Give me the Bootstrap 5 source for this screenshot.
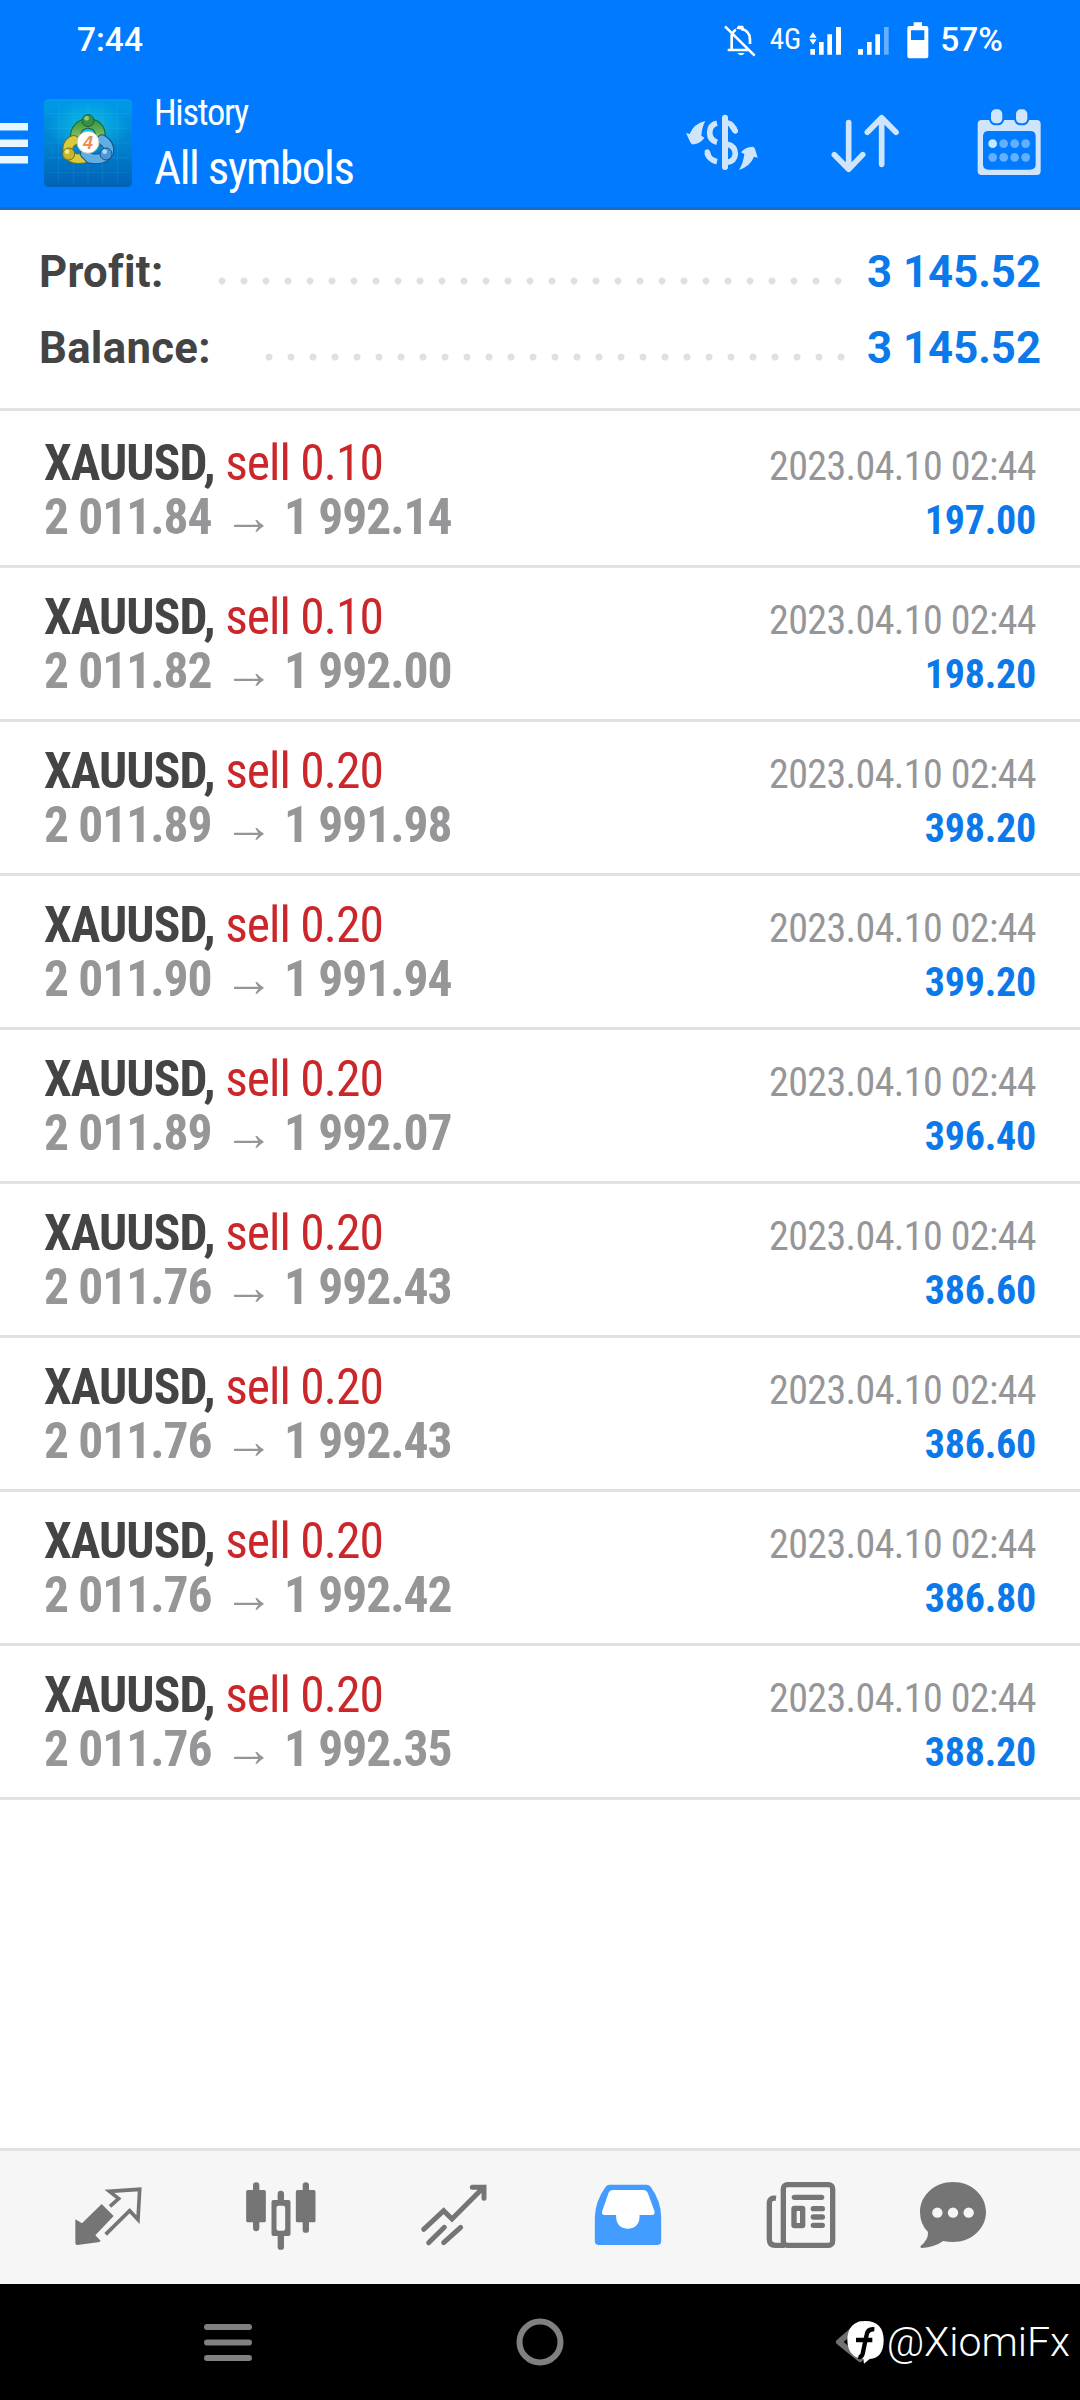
<!DOCTYPE html>
<html lang="en">
<head>
<meta charset="utf-8">
<meta name="viewport" content="width=device-width, initial-scale=1">
<title>History - All symbols</title>
<link href="https://cdn.jsdelivr.net/npm/bootstrap@5.3.0/dist/css/bootstrap.min.css" rel="stylesheet">
<style>
  body { font-family: Roboto, "Noto Sans", sans-serif; background: #fff; width: 1080px; height: 2400px; overflow: hidden; }
  svg { display: block; flex: none; }
  .cond { font-family: "Roboto Condensed", Roboto, sans-serif; }
  .top-zone { background: #007aff; height: 210px; border-bottom: 3px solid #1a6dc0; color: #fff; }
  .status { height: 79px; padding: 0 77px 0 77px; font-weight: 500; font-size: 33.5px; line-height: 79px; }
  .status .net { font-size: 29px; font-weight: 400; }
  .app-bar { height: 128px; padding-right: 39px; }
  .titles { margin-left: 22px; padding-top: 6px; }
  .title-sm { font-size: 36.5px; line-height: 44px; letter-spacing: -1.3px; font-weight: 450; }
  .title-lg { font-size: 47px; line-height: 66px; letter-spacing: -1.4px; font-weight: 450; }
  .summary { height: 201px; padding: 24px 39px 0 39px; border-bottom: 3px solid #e1e1e1; font-size: 43.7px; font-weight: 700; color: #444; }
  .sum-line { height: 76px; line-height: 76px; }
  .sum-label { letter-spacing: .3px; }
  .dots { height: 8px; margin-top: 18px; background: radial-gradient(circle at 50% 50%, #e0e0e0 3px, transparent 4px) 0 0 / 22px 8px repeat-x; }
  .dots-a { width: 638px; margin-right: 18px; }
  .dots-b { width: 594px; margin-right: 15px; }
  .blue { color: #0b79ea; }
  .deal { height: 154px; padding: 22px 44px 0 44px; border-bottom: 3px solid #e1e1e1; }
  .deal:first-child { height: 157px; padding-top: 25px; }
  .deal-line { height: 54px; line-height: 54px; font-size: 49.5px; white-space: nowrap; letter-spacing: -.93px; }
  .sym { font-weight: 700; color: #444; }
  .side { color: #cb272a; }
  .prices { font-weight: 700; color: #969698; letter-spacing: -1.05px; }
  .arrow { font-family: "Liberation Sans", sans-serif; font-size: 50px; line-height: 1; margin: 0 11px 0 12.5px; }
  .when { font-size: 40px; color: #969698; letter-spacing: -.6px; }
  .gain { font-size: 40px; font-weight: 700; letter-spacing: -.25px; }
  .tabs-bar { height: 136px; background: #f6f6f6; border-top: 3px solid #e1e1e1; padding: 0 0 5px 21.5px; color: #757575; }
  .tab-item { width: 173.2px; }
  .tab-item:last-child { width: 131px; }
  .sys-bar { height: 116px; background: #000; padding: 0 204px; }
  .handle { right: 10px; top: 30px; font-size: 41px; font-weight: 350; line-height: 56px; color: #fff; }
</style>
</head>
<body class="d-flex flex-column">
<header class="top-zone flex-shrink-0">
  <div class="status d-flex align-items-center">
    <span class="me-auto">7:44</span>
    <svg width="34" height="34" viewBox="190 62 102 102" fill="none" stroke="#fff" stroke-width="8">
      <path d="M199 72 288 160M219 96V143M207 143H268M222 92Q226 84 232 82M247 80Q274 84 274 112V125"/>
      <path d="M233 80 238 70H253L258 82ZM236 152H258Q247 166 236 152Z" fill="#fff" stroke="none"/>
    </svg>
    <span class="net cond" style="margin-left:14px">4G</span>
    <svg style="margin-left:8px" width="32" height="34" viewBox="450 62 96 102" fill="#fff"><path d="M451 106 462 90 473 106ZM451 111H473L462 127ZM454 140H468V157H454ZM480 119H494V157H480ZM505 96H519V157H505ZM531 74H546V157H531Z"/></svg>
    <svg style="margin-left:16px" width="32" height="34" viewBox="597 62 96 102" fill="#fff"><path d="M600 140H615V157H600ZM627 119H641V157H627ZM652 96H666V157H652Z"/><path opacity=".4" d="M678 74H692V157H678Z"/></svg>
    <svg style="margin-left:18px" width="22" height="38" viewBox="746 56 66 114" fill="#fff"><path fill-rule="evenodd" d="M766 60H791V71H804Q810 71 810 77V162Q810 168 804 168H753Q747 168 747 162V77Q747 71 753 71H766ZM758 84V113H798V84Z"/></svg>
    <span style="margin-left:11px">57%</span>
  </div>
  <div class="app-bar cond d-flex align-items-center">
    <svg width="28" height="42" viewBox="0 0 28 42" fill="#e6f7ff"><path d="M0 1H28V8.500H0ZM0 17.500H28V25H0ZM0 34H28V41.500H0Z"/></svg>
    <svg style="margin-left:16px" width="88" height="88" viewBox="0 0 264 264">
      <defs>
        <linearGradient id="lg" x1="0" y1="0" x2="0" y2="1"><stop offset="0" stop-color="#009bea"/><stop offset=".5" stop-color="#0084d0"/><stop offset="1" stop-color="#0061b5"/></linearGradient>
        <radialGradient id="glow"><stop offset="0" stop-color="#10c6e0" stop-opacity=".9"/><stop offset="1" stop-color="#10c6e0" stop-opacity="0"/></radialGradient>
        <linearGradient id="gg" x1="0" y1="0" x2="0" y2="1"><stop offset="0" stop-color="#3f9d49"/><stop offset="1" stop-color="#9acb68"/></linearGradient>
      </defs>
      <rect width="264" height="264" rx="14" fill="url(#lg)"/>
      <ellipse cx="132" cy="85" rx="120" ry="80" fill="url(#glow)"/>
      <path d="M44 10V254M88 10V254M132 10V254M176 10V254M220 10V254M10 44H254M10 88H254M10 132H254M10 176H254M10 220H254" stroke="#5ed4ff" stroke-opacity=".2" stroke-width="2"/>
      <g fill="none" stroke-linecap="round">
        <path d="M98 126Q88 98 110 80Q132 66 156 80Q176 98 166 126" stroke="#1d6138" stroke-width="32"/>
        <path d="M98 126Q88 98 110 80Q132 66 156 80Q176 98 166 126" stroke="url(#gg)" stroke-width="26"/>
        <path d="M90 124Q68 132 72 160Q82 184 118 178" stroke="#796e20" stroke-width="32"/>
        <path d="M90 124Q68 132 72 160Q82 184 118 178" stroke="#d8cb3e" stroke-width="26"/>
        <path d="M174 122Q198 136 194 160Q180 186 138 178L124 164" stroke="#155487" stroke-width="32"/>
        <path d="M174 122Q198 136 194 160Q180 186 138 178L124 164" stroke="#60aee4" stroke-width="26"/>
      </g>
      <circle cx="132" cy="65" r="18" fill="#3b8f43" stroke="#1d6138" stroke-width="3"/><circle cx="128" cy="58" r="7" fill="#8ccf80"/>
      <circle cx="74" cy="165" r="18" fill="#c9b532" stroke="#796e20" stroke-width="3"/><circle cx="69" cy="158" r="7" fill="#f1ea8d"/>
      <circle cx="186" cy="165" r="18" fill="#4c97d6" stroke="#155487" stroke-width="3"/><circle cx="182" cy="158" r="7" fill="#a9dbff"/>
      <circle cx="132" cy="130" r="33" fill="#fff" stroke="#b5c3b0" stroke-width="3"/>
      <text x="132" y="149" text-anchor="middle" font-family="Liberation Sans, sans-serif" font-style="italic" font-weight="700" font-size="54" fill="#ee8e4e">4</text>
    </svg>
    <div class="titles me-auto">
      <div class="title-sm">History</div>
      <div class="title-lg">All symbols</div>
    </div>
    <svg width="72" height="68" viewBox="78 324 216 204" fill="#cfe5fb">
      <path d="M78 396 89 399Q101 368 136 360Q126 378 124 404L133 410Q124 426 102 430Q94 432 91 424Z"/>
      <path d="M293 470 282 467Q272 494 237 507Q250 486 253 459L243 454Q256 438 278 437Q284 438 285 444Z"/>
      <g fill="none" stroke="#cfe5fb" stroke-width="17"><path stroke-width="18" stroke-linecap="round" d="M195 350V498"/><path d="M171 367Q149 372 149 396Q150 418 171 424M141 455Q146 476 171 482M203 366Q218 368 226 392M203 430Q226 436 226 459Q224 480 203 484"/><path stroke-width="16" stroke-linecap="round" d="M142 453 144 458M216 376 226 390"/></g>
    </svg>
    <svg style="margin-left:73px" width="68" height="68" viewBox="513 324 204 204" fill="none" stroke="#cfe5fb" stroke-width="17" stroke-linecap="round" stroke-linejoin="round"><path d="M566 365V504M523 461 566 505 608 461M665 490V352M622 394 665 350 708 394"/></svg>
    <svg style="margin-left:78px" width="64" height="68" viewBox="949 324 192 204" fill="#cfe5fb">
      <path fill-rule="evenodd" d="M963 357H1128Q1140 357 1140 369V510Q1140 522 1128 522H963Q951 522 951 510V369Q951 357 963 357ZM984 390Q967 390 967 406V490Q967 506 984 506H1108Q1125 506 1125 490V406Q1125 390 1108 390Z"/>
      <g stroke="#007aff" stroke-width="6"><rect x="988" y="322" width="40" height="48" rx="17"/><rect x="1063" y="322" width="40" height="48" rx="17"/></g>
      <circle cx="996" cy="428" r="13" fill="#bfeaff"/>
      <g fill="#62b0ff"><circle cx="1029" cy="428" r="13"/><circle cx="1062" cy="428" r="13"/><circle cx="1095" cy="428" r="13"/><circle cx="996" cy="469" r="13"/><circle cx="1029" cy="469" r="13"/><circle cx="1062" cy="469" r="13"/><circle cx="1095" cy="469" r="13"/></g>
    </svg>
  </div>
</header>

<section class="summary flex-shrink-0">
  <div class="sum-line d-flex align-items-center"><span class="sum-label me-auto">Profit:</span><span class="dots dots-a"></span><span class="blue">3 145.52</span></div>
  <div class="sum-line d-flex align-items-center"><span class="sum-label me-auto">Balance:</span><span class="dots dots-b"></span><span class="blue">3 145.52</span></div>
</section>

<main class="cond flex-grow-1">
  <div class="deal">
    <div class="deal-line d-flex justify-content-between align-items-baseline"><span><span class="sym">XAUUSD,</span> <span class="side">sell 0.10</span></span><span class="when">2023.04.10 02:44</span></div>
    <div class="deal-line d-flex justify-content-between align-items-baseline"><span class="prices">2 011.84<span class="arrow">→</span>1 992.14</span><span class="gain blue">197.00</span></div>
  </div>
  <div class="deal">
    <div class="deal-line d-flex justify-content-between align-items-baseline"><span><span class="sym">XAUUSD,</span> <span class="side">sell 0.10</span></span><span class="when">2023.04.10 02:44</span></div>
    <div class="deal-line d-flex justify-content-between align-items-baseline"><span class="prices">2 011.82<span class="arrow">→</span>1 992.00</span><span class="gain blue">198.20</span></div>
  </div>
  <div class="deal">
    <div class="deal-line d-flex justify-content-between align-items-baseline"><span><span class="sym">XAUUSD,</span> <span class="side">sell 0.20</span></span><span class="when">2023.04.10 02:44</span></div>
    <div class="deal-line d-flex justify-content-between align-items-baseline"><span class="prices">2 011.89<span class="arrow">→</span>1 991.98</span><span class="gain blue">398.20</span></div>
  </div>
  <div class="deal">
    <div class="deal-line d-flex justify-content-between align-items-baseline"><span><span class="sym">XAUUSD,</span> <span class="side">sell 0.20</span></span><span class="when">2023.04.10 02:44</span></div>
    <div class="deal-line d-flex justify-content-between align-items-baseline"><span class="prices">2 011.90<span class="arrow">→</span>1 991.94</span><span class="gain blue">399.20</span></div>
  </div>
  <div class="deal">
    <div class="deal-line d-flex justify-content-between align-items-baseline"><span><span class="sym">XAUUSD,</span> <span class="side">sell 0.20</span></span><span class="when">2023.04.10 02:44</span></div>
    <div class="deal-line d-flex justify-content-between align-items-baseline"><span class="prices">2 011.89<span class="arrow">→</span>1 992.07</span><span class="gain blue">396.40</span></div>
  </div>
  <div class="deal">
    <div class="deal-line d-flex justify-content-between align-items-baseline"><span><span class="sym">XAUUSD,</span> <span class="side">sell 0.20</span></span><span class="when">2023.04.10 02:44</span></div>
    <div class="deal-line d-flex justify-content-between align-items-baseline"><span class="prices">2 011.76<span class="arrow">→</span>1 992.43</span><span class="gain blue">386.60</span></div>
  </div>
  <div class="deal">
    <div class="deal-line d-flex justify-content-between align-items-baseline"><span><span class="sym">XAUUSD,</span> <span class="side">sell 0.20</span></span><span class="when">2023.04.10 02:44</span></div>
    <div class="deal-line d-flex justify-content-between align-items-baseline"><span class="prices">2 011.76<span class="arrow">→</span>1 992.43</span><span class="gain blue">386.60</span></div>
  </div>
  <div class="deal">
    <div class="deal-line d-flex justify-content-between align-items-baseline"><span><span class="sym">XAUUSD,</span> <span class="side">sell 0.20</span></span><span class="when">2023.04.10 02:44</span></div>
    <div class="deal-line d-flex justify-content-between align-items-baseline"><span class="prices">2 011.76<span class="arrow">→</span>1 992.42</span><span class="gain blue">386.80</span></div>
  </div>
  <div class="deal">
    <div class="deal-line d-flex justify-content-between align-items-baseline"><span><span class="sym">XAUUSD,</span> <span class="side">sell 0.20</span></span><span class="when">2023.04.10 02:44</span></div>
    <div class="deal-line d-flex justify-content-between align-items-baseline"><span class="prices">2 011.76<span class="arrow">→</span>1 992.35</span><span class="gain blue">388.20</span></div>
  </div>
</main>

<nav class="tabs-bar d-flex align-items-center flex-shrink-0">
  <div class="tab-item d-flex justify-content-center">
    <svg width="70" height="70" viewBox="41 60 210 210">
      <path d="M48 178 68 190 127 132 163 168 108 226 124 242Q122 246 116 247L54 255Q48 255 48 249Z" fill="currentColor"/>
      <path d="M152 139 178 116 150 94 241 88 236 179 211 152 139 223" fill="none" stroke="currentColor" stroke-width="11" stroke-linejoin="miter"/>
    </svg>
  </div>
  <div class="tab-item d-flex justify-content-center">
    <svg width="70" height="70" viewBox="558.500 60 210 210" fill="currentColor">
      <rect x="559" y="90" width="59" height="97" rx="5"/><rect x="708" y="90" width="59" height="97" rx="5"/>
      <path fill-rule="evenodd" d="M641 120H686Q692 120 692 126V222Q692 228 686 228H641Q635 228 635 222V126Q635 120 641 120ZM656 137Q650 137 650 143V206Q650 212 656 212H670Q676 212 676 206V143Q676 137 670 137Z"/>
      <path fill="none" stroke="currentColor" stroke-width="19" stroke-linecap="round" d="M589 76V95M589 183V204M738 76V95M738 183V209M663 102V120M663 230V260"/>
    </svg>
  </div>
  <div class="tab-item d-flex justify-content-center">
    <svg width="70" height="70" viewBox="58 60 210 210" fill="none" stroke="currentColor" stroke-width="15" stroke-linecap="round"><path d="M72 208 132 152 157 177 252 82M218 82H253V115M87 248 134 202M132 248 183 202"/></svg>
  </div>
  <div class="tab-item d-flex justify-content-center">
    <svg width="70" height="70" viewBox="577.500 60 210 210">
      <path d="M627 74H738Q746 74 751 81Q782 124 782 172V243Q782 255 770 255H595Q583 255 583 243V172Q584 124 615 81Q620 74 627 74Z" fill="#439cff"/>
      <path d="M638 90H728Q738 90 742 99L762 154Q764 165 755 165H717V172C717 218 647 218 647 172V165H612Q602 165 605 154L624 99Q628 90 638 90Z" fill="#fff"/>
    </svg>
  </div>
  <div class="tab-item d-flex justify-content-center">
    <svg width="70" height="70" viewBox="48 60 210 210" fill="none" stroke="currentColor" stroke-width="16">
      <rect x="100" y="74" width="148" height="182" rx="12"/><path d="M78 115Q58 112 58 130V238Q58 256 76 256H104"/>
      <rect x="132" y="145" width="26" height="52" rx="1"/>
      <path stroke-linecap="round" d="M133 112H215M190 146H217M190 171H217M190 196H217"/>
    </svg>
  </div>
  <div class="tab-item d-flex justify-content-center">
    <svg width="70" height="70" viewBox="504 60 210 210" fill="currentColor">
      <path d="M609 66C664 66 708 106 708 156C708 206 664 246 609 246Q594 246 580 243Q554 261 516 264Q509 263 512 258Q536 238 534 216Q510 192 510 156C510 106 554 66 609 66Z"/>
      <g fill="#f6f6f6"><circle cx="562" cy="158" r="15.500"/><circle cx="609" cy="158" r="15.500"/><circle cx="656" cy="158" r="15.500"/></g>
    </svg>
  </div>
</nav>

<footer class="sys-bar position-relative d-flex justify-content-between align-items-center flex-shrink-0">
  <svg width="48" height="38" viewBox="0 0 48 38" stroke="#808080" stroke-width="6" stroke-linecap="round"><path d="M3 4H45M3 19.500H45M3 35H45"/></svg>
  <svg width="48" height="48" viewBox="0 0 48 48"><circle cx="24" cy="24" r="20.500" fill="none" stroke="#808080" stroke-width="6"/></svg>
  <svg width="48" height="48" viewBox="0 0 48 48" fill="none" stroke="#707070" stroke-width="6" stroke-linejoin="round" stroke-linecap="round"><path d="M32 6 11 24 32 41Z"/></svg>
  <div class="handle position-absolute d-flex align-items-center">
    <svg width="38" height="44" viewBox="82 62 114 132">
      <path d="M137 65Q191 66 192 122Q192 176 150 179L133 193 131 179Q84 174 83 122Q84 66 137 65Z" fill="#fff"/>
      <path d="M164 90Q144 88 141 106L129 163Q126 175 116 173M109 122H158" fill="none" stroke="#000" stroke-width="13"/>
    </svg>
    <span style="margin-left:2px">@XiomiFx</span>
  </div>
</footer>
<script src="https://cdn.jsdelivr.net/npm/bootstrap@5.3.0/dist/js/bootstrap.bundle.min.js"></script>
</body>
</html>
